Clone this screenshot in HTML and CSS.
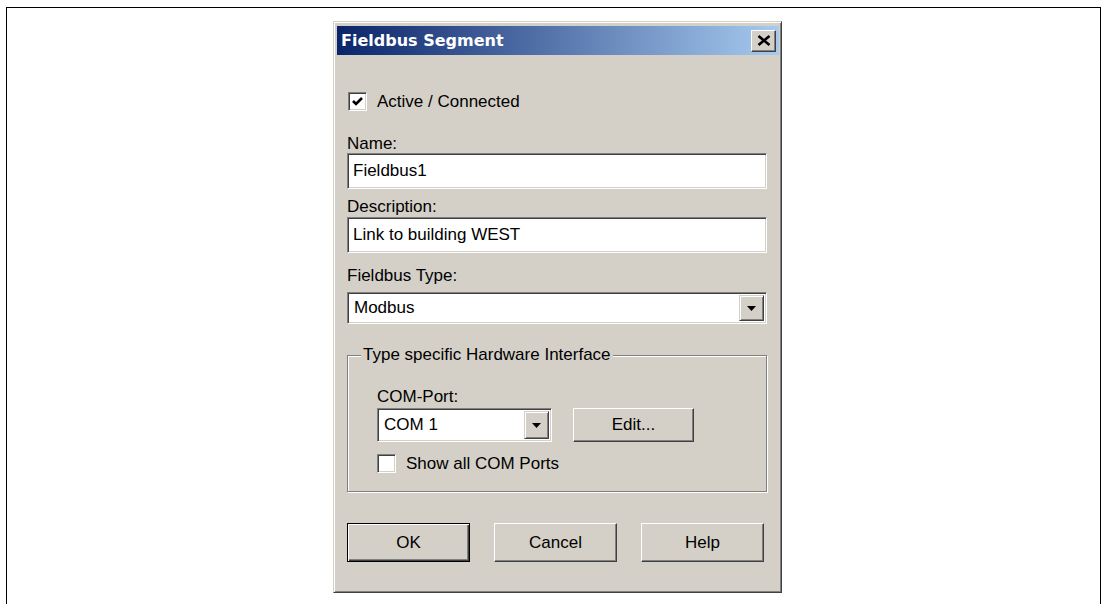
FILE: index.html
```html
<!DOCTYPE html>
<html lang="en">
<head>
<meta charset="utf-8">
<title>Fieldbus Segment</title>
<link rel="stylesheet" href="styles.css">
</head>
<body>
<div class="frame">
  <div class="dialog">
    <div class="titlebar">
      <span class="title">Fieldbus Segment</span>
      <button class="close" type="button" aria-label="Close">
        <svg width="14" height="11" viewBox="0 0 14 11"><path d="M1.5 1 L12.5 10 M12.5 1 L1.5 10" stroke="#000" stroke-width="2.6" fill="none"/></svg>
      </button>
    </div>

    <div class="content">
      <div class="check check-active">
        <span class="box"><svg width="15" height="15" viewBox="0 0 15 15"><polyline points="3,7 6,10 12,4" stroke="#000" stroke-width="2.6" fill="none"/></svg></span>
        <span>Active / Connected</span>
      </div>

      <div class="label label-name">Name:</div>
      <div class="edit">Fieldbus1</div>

      <div class="label label-desc">Description:</div>
      <div class="edit edit-desc">Link to building WEST</div>

      <div class="label label-type">Fieldbus Type:</div>
      <div class="combo combo-type">
        <span class="combo-text">Modbus</span>
        <span class="drop"><svg width="9" height="5" viewBox="0 0 9 5"><polygon points="0,0 9,0 4.5,5" fill="#000"/></svg></span>
      </div>

      <div class="group">
        <div class="legend">Type specific Hardware Interface</div>
        <div class="group-body">
          <div class="label">COM-Port:</div>
          <div class="port-row">
            <div class="combo combo-port">
              <span class="combo-text">COM 1</span>
              <span class="drop"><svg width="9" height="5" viewBox="0 0 9 5"><polygon points="0,0 9,0 4.5,5" fill="#000"/></svg></span>
            </div>
            <button class="btn btn-edit" type="button">Edit...</button>
          </div>
          <div class="check check-ports">
            <span class="box"></span>
            <span>Show all COM Ports</span>
          </div>
        </div>
      </div>

      <div class="buttons">
        <button class="btn btn-default" type="button">OK</button>
        <button class="btn" type="button">Cancel</button>
        <button class="btn" type="button">Help</button>
      </div>
    </div>
  </div>
</div>
</body>
</html>
```

FILE: styles.css
```css
* {
  box-sizing: border-box;
}

html,
body {
  margin: 0;
  height: 100%;
}

body {
  background: #fff;
  color: #000;
  font-family: "Liberation Sans", Arial, sans-serif;
  font-size: 17px;
  overflow: hidden;
}

/* page frame, open at the bottom */
.frame {
  margin: 7px 0 0 6px;
  width: 1095px;
  height: calc(100vh - 7px);
  border: 1px solid #000;
  border-bottom: none;
  padding: 13px 0 0 326px;
}

/* window */
.dialog {
  width: 449px;
  height: 572px;
  background: #d4d0c8;
  border: 1px solid;
  border-color: #d4d0c8 #404040 #404040 #d4d0c8;
  box-shadow: inset 1px 1px #fff, inset -1px -1px #808080;
  padding: 4px 2px 3px 3px;
  display: flex;
  flex-direction: column;
}

.titlebar {
  height: 29px;
  flex: none;
  background: linear-gradient(to right, #0a246a, #a6caf0);
  display: flex;
  align-items: center;
  justify-content: space-between;
  padding: 0 3px 0 4px;
}

.title {
  color: #fff;
  font: bold 16px "DejaVu Sans", Verdana, sans-serif;
  letter-spacing: 0;
}

.close {
  width: 25px;
  height: 22px;
  padding: 0;
  background: #d4d0c8;
  border: 1px solid;
  border-color: #fff #404040 #404040 #fff;
  box-shadow: inset -1px -1px #808080;
  display: flex;
  align-items: center;
  justify-content: center;
}

.content {
  padding: 37px 12px 0 10px;
  display: flex;
  flex-direction: column;
}

/* checkboxes */
.check {
  display: flex;
  align-items: center;
  gap: 10px;
  height: 19px;
  line-height: 19px;
}

.check-active {
  margin-left: 1px;
}

.box {
  width: 19px;
  height: 19px;
  flex: none;
  background: #fff;
  border: 1px solid;
  border-color: #808080 #fff #fff #808080;
  box-shadow: inset 1px 1px #404040, inset -1px -1px #d4d0c8;
  padding: 1px;
  display: flex;
}

/* labels and fields */
.label {
  line-height: 19px;
}

.label-name {
  margin-top: 23px;
}

.label-desc {
  margin-top: 8px;
}

.label-type {
  margin-top: 13px;
}

.edit {
  height: 36px;
  background: #fff;
  border: 1px solid;
  border-color: #808080 #fff #fff #808080;
  box-shadow: inset 1px 1px #404040, inset -1px -1px #d4d0c8;
  padding: 0 5px;
  display: flex;
  align-items: center;
}

.edit-desc {
  margin-top: 1px;
}

.combo {
  background: #fff;
  border: 1px solid;
  border-color: #808080 #fff #fff #808080;
  box-shadow: inset 1px 1px #404040, inset -1px -1px #d4d0c8;
  padding: 2px;
  display: flex;
  align-items: stretch;
}

.combo-text {
  flex: 1;
  display: flex;
  align-items: center;
  padding-left: 4px;
}

.combo-type {
  margin-top: 7px;
  height: 32px;
}

.drop {
  width: 25px;
  flex: none;
  background: #d4d0c8;
  border: 1px solid;
  border-color: #d4d0c8 #404040 #404040 #d4d0c8;
  box-shadow: inset 1px 1px #fff, inset -1px -1px #808080;
  display: flex;
  align-items: center;
  justify-content: center;
}

/* group box */
.group {
  margin-top: 31px;
  border: 1px solid #808080;
  box-shadow: inset 1px 1px #fff, 1px 1px #fff;
  display: flex;
  flex-direction: column;
}

.legend {
  align-self: flex-start;
  margin: -11px 0 0 13px;
  padding: 0 2px;
  background: #d4d0c8;
  line-height: 19px;
}

.group-body {
  padding: 23px 0 18px 29px;
}

.port-row {
  margin-top: 2px;
  display: flex;
  gap: 21px;
}

.combo-port {
  width: 175px;
  height: 34px;
}

.check-ports {
  margin-top: 12px;
}

/* push buttons */
.btn {
  font: inherit;
  color: #000;
  background: #d4d0c8;
  width: 123px;
  height: 39px;
  padding: 0;
  border: 1px solid;
  border-color: #fff #404040 #404040 #fff;
  box-shadow: inset -1px -1px #808080;
}

.btn-edit {
  width: 121px;
  height: 34px;
}

.btn-default {
  border-color: #000;
  box-shadow: inset 1px 1px #fff, inset -1px -1px #404040, inset -2px -2px #808080;
}

.buttons {
  margin-top: 31px;
  display: flex;
  gap: 24px;
}
```
